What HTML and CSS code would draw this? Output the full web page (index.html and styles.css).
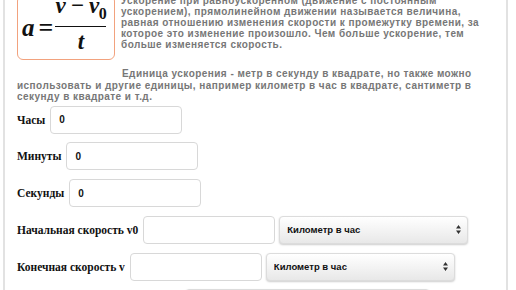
FILE: index.html
```html
<!DOCTYPE html>
<html lang="ru">
<head>
  <meta charset="UTF-8" />
  <meta name="viewport" content="width=device-width, initial-scale=1.0" />
  <title>Калькулятор ускорения</title>
  <link rel="stylesheet" href="styles.css">
</head>
<body>
  <div class="page">
    <div class="intro">
      <div class="formula">
        <span class="var">a</span>
        <span class="eq">=</span>
        <span class="frac">
          <span class="num"><i>v</i> − <i>v</i><sub>0</sub></span>
          <span class="den"><i>t</i></span>
        </span>
      </div>
      <p class="text">Ускорение при равноускоренном (движение с постоянным ускорением), прямолинейном движении называется величина, равная отношению изменения скорости к промежутку времени, за которое это изменение произошло. Чем больше ускорение, тем больше изменяется скорость.</p>
      <p class="text indent">Единица ускорения - метр в секунду в квадрате, но также можно использовать и другие единицы, например километр в час в квадрате, сантиметр в секунду в квадрате и т.д.</p>
    </div>

    <form class="calc">
      <div class="row">
        <label for="hours">Часы</label>
        <input type="text" id="hours" value="0">
      </div>
      <div class="row">
        <label for="minutes">Минуты</label>
        <input type="text" id="minutes" value="0">
      </div>
      <div class="row">
        <label for="seconds">Секунды</label>
        <input type="text" id="seconds" value="0">
      </div>
      <div class="row">
        <label for="v0">Начальная скорость v0</label>
        <input type="text" id="v0">
        <select class="unit">
          <option>Километр в час</option>
          <option>Метр в секунду</option>
        </select>
      </div>
      <div class="row">
        <label for="v">Конечная скорость v</label>
        <input type="text" id="v">
        <select class="unit">
          <option>Километр в час</option>
          <option>Метр в секунду</option>
        </select>
      </div>
      <div class="row">
        <button type="button" class="calc-btn">Рассчитать</button>
      </div>
    </form>
  </div>
</body>
</html>
```

FILE: styles.css
```css
body {
  margin: 0;
  background-color: #ffffff;
  overflow: hidden;
}
.page {
  margin: -9px 8px 0 3px;
  padding: 0 10px 0 12px;
  border-left: 2px solid #e2e2e2;
  border-right: 2px solid #e2e2e2;
  height: 400px;
}
.intro {
  padding-top: 4px;
}
.formula {
  float: left;
  width: 98px;
  height: 65px;
  margin-right: 6px;
  padding-left: 4px;
  border: 1px solid #f2a27e;
  border-radius: 6px;
  display: flex;
  align-items: center;
  font-family: "Liberation Serif", serif;
  font-weight: bold;
  font-style: italic;
  font-size: 23px;
  color: #111;
  box-sizing: border-box;
}
.formula .var {
  font-size: 25px;
  margin-right: 4px;
}
.formula .eq {
  font-style: normal;
  font-size: 26px;
  margin-right: 2px;
}
.frac {
  display: flex;
  flex-direction: column;
  align-items: center;
  width: 51px;
  margin-top: -5px;
}
.num {
  width: 100%;
  text-align: center;
  white-space: nowrap;
  border-bottom: 1.5px solid #111;
  padding-bottom: 10px;
  line-height: 20px;
  letter-spacing: -0.5px;
}
.num sub {
  font-style: normal;
  font-size: 16px;
  line-height: 0;
  vertical-align: -6px;
}
.den {
  line-height: 24px;
  padding-top: 3px;
}
.text {
  margin: 0;
  font-family: "Liberation Sans", Arial, sans-serif;
  font-weight: bold;
  font-size: 10px;
  line-height: 11px;
  letter-spacing: 0.45px;
  color: #777777;
}
.indent {
  clear: left;
  margin-top: 18px;
  text-indent: 105px;
  line-height: 11.5px;
}
.calc {
  margin-top: 3px;
}
.row {
  display: flex;
  align-items: center;
  margin-bottom: 8.75px;
}
.row label {
  font-family: "Liberation Serif", serif;
  font-weight: bold;
  font-size: 11.5px;
  color: #111;
  margin-right: 5px;
}
.row input {
  width: 132px;
  height: 28px;
  box-sizing: border-box;
  border: 1px solid #d8d8d8;
  border-radius: 4px;
  padding: 0 8px;
  font-family: "Liberation Sans", Arial, sans-serif;
  font-weight: bold;
  font-size: 10px;
  color: #111;
}
.unit {
  appearance: none;
  width: 189px;
  height: 28px;
  margin-left: 4px;
  padding: 0 7px;
  border: 1px solid #dcdcdc;
  border-radius: 4px;
  background-color: #f4f4f4;
  background-image:
    url("data:image/svg+xml;utf8,<svg xmlns='http://www.w3.org/2000/svg' width='5' height='9'><path d='M2.5 0L5 3.5H0Z M2.5 9L5 5.5H0Z' fill='%23333'/></svg>"),
    linear-gradient(#ffffff, #e8e8e8);
  background-position: right 6px center, 0 0;
  background-size: 5px 9px, 100% 100%;
  background-repeat: no-repeat;
  box-shadow: 0 1px 2px rgba(0, 0, 0, 0.2);
  font-family: "Liberation Sans", Arial, sans-serif;
  font-weight: bold;
  font-size: 9.5px;
  color: #111;
}
.calc-btn {
  margin-left: 168px;
  width: 245px;
  height: 28px;
  border: 1px solid #dcdcdc;
  border-radius: 4px;
  background: linear-gradient(#ffffff, #e8e8e8);
  box-shadow: 0 1px 2px rgba(0, 0, 0, 0.2);
  font-family: "Liberation Sans", Arial, sans-serif;
  font-weight: bold;
  font-size: 10px;
}
```
